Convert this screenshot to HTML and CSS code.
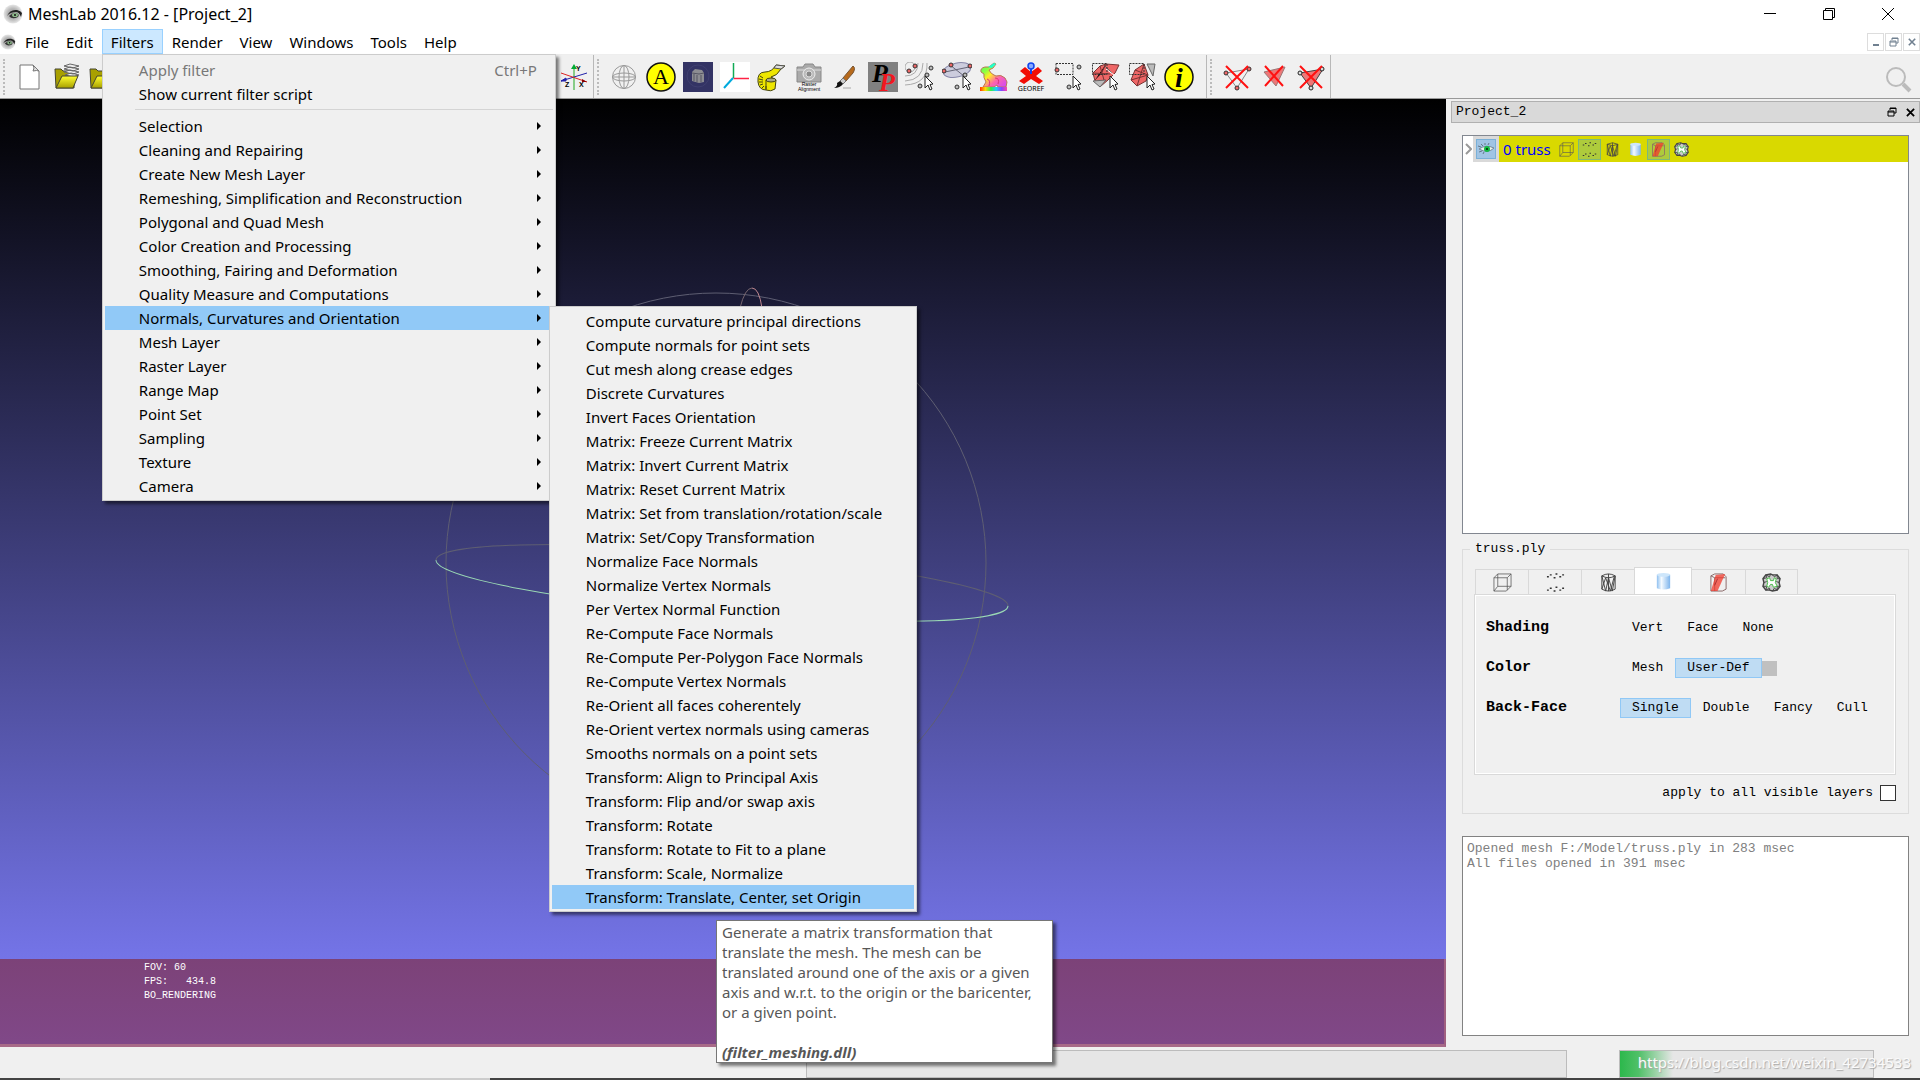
FILE: index.html
```html
<!DOCTYPE html>
<html lang="en">
<head>
    <meta charset="UTF-8">
    <meta name="viewport" content="width=device-width, initial-scale=1.0">
    <title>MeshLab 2016.12 - [Project_2]</title>
    <link rel="stylesheet" href="styles.css">
</head>
<body>
<!-- shared icons -->
<svg class="defs" width="0" height="0">
    <defs>
        <radialGradient id="ball"><stop offset="0" stop-color="#888"/><stop offset="0.6" stop-color="#bbb"/><stop offset="1" stop-color="#e8e8e8"/></radialGradient>
        <linearGradient id="cyl"><stop offset="0" stop-color="#8fc0f0"/><stop offset="0.35" stop-color="#f4faff"/><stop offset="1" stop-color="#7db4ec"/></linearGradient>
        <linearGradient id="folder" x2="0" y2="1"><stop offset="0" stop-color="#ffff30"/><stop offset="1" stop-color="#a8a000"/></linearGradient>
        <linearGradient id="rainbow"><stop offset="0" stop-color="#f30"/><stop offset="0.2" stop-color="#fd0"/><stop offset="0.4" stop-color="#3e4"/><stop offset="0.6" stop-color="#2cf"/><stop offset="0.8" stop-color="#84f"/><stop offset="1" stop-color="#f4a"/></linearGradient>
        <linearGradient id="bunny" x2="1" y2="1"><stop offset="0" stop-color="#4f6"/><stop offset="0.25" stop-color="#8f4"/><stop offset="0.42" stop-color="#fe2"/><stop offset="0.65" stop-color="#f6a"/><stop offset="1" stop-color="#c4f"/></linearGradient>
    </defs>
    <symbol id="logo" viewBox="0 0 20 20">
        <circle cx="10" cy="10" r="9.5" fill="url(#ball)"/>
        <path d="M4 12Q7 5 14 6Q18 7 19 9L18 13Q16 8 13 8Q7 8 4 12Z" fill="#222"/>
        <path d="M6 12Q9 16 15 13Q17 10 13 9Q9 9 6 12Z" fill="#333"/>
        <ellipse cx="12" cy="11" rx="3" ry="2" fill="#8db98a"/>
        <circle cx="12" cy="11" r="1" fill="#111"/>
    </symbol>
    <symbol id="box" viewBox="0 0 20 20">
        <path d="M1 5L5 1H19V14L14 19H1ZM1 5H15V18M15 5L19 1M5 1V14H19M5 14L1 19" fill="none" stroke="#555" stroke-opacity="0.8"/>
    </symbol>
    <symbol id="points" viewBox="0 0 20 20">
        <path d="M1 4h2M4 2h2M8 5h2M10 1h2M14 4h2M17 2h2M1 18h2M4 16h2M8 19h2M10 15h2M14 18h2M17 16h2" stroke="#333" stroke-width="1.5"/>
    </symbol>
    <symbol id="wire" viewBox="0 0 20 20">
        <path d="M3 3Q10 -1 17 3V17Q10 21 3 17ZM3 3Q10 7 17 3M3 3L7 19L10 5L14 19L17 3M3 17L7 5L12 19L16 4M10 1V19" fill="none" stroke="#444"/>
    </symbol>
    <symbol id="solid" viewBox="0 0 20 20">
        <path d="M3 3V17Q10 20 17 17V3Z" fill="url(#cyl)"/>
        <ellipse cx="10" cy="3" rx="7" ry="2" fill="#cde6fb"/>
    </symbol>
    <symbol id="selface" viewBox="0 0 20 20">
        <path d="M2 3L6 1H15L18 4V17L14 19H2ZM2 3L6 5V19M6 5H17" fill="none" stroke="#866"/>
        <path d="M7 2L17 1L9 19H2Z" fill="#f23a2c" fill-opacity="0.75"/>
        <path d="M9 6L6 13" stroke="#a33"/>
    </symbol>
    <symbol id="bound" viewBox="0 0 20 20">
        <path d="M4 2L9 1L11 2L16 2L19 6L18 10L19 14L16 18L11 19L8 18L4 18L1 14L2 10L1 6Z" fill="#ccc" stroke="#444" stroke-width="1.5"/>
        <path d="M1 6L5 5L4 2L8 4L9 1M11 2L13 4L16 2L16 6L19 6M2 10L5 9M18 10L15 9M1 14L5 14L4 18L8 16L8 18M11 19L13 16L16 18L16 14L19 14" fill="none" stroke="#444"/>
        <path d="M5 6L8 5L9 8H12L13 5L15 6L14 10L16 14L12 15L11 12H9L7 15L5 14L6 10Z" fill="#fff" stroke="#4b4"/>
    </symbol>
    <symbol id="pointer" viewBox="0 0 10 16">
        <path d="M1 1V13L4 10L6 15L8 14L6 9.500L9 9Z" fill="#fff" stroke="#222"/>
    </symbol>
    <symbol id="float" viewBox="0 0 10 10">
        <path d="M3 3V1H9V6H7M1 4H7V9H1ZM1 5H7M3 1.500H9" fill="none" stroke="currentColor"/>
    </symbol>
    <symbol id="cross" viewBox="0 0 10 10">
        <path d="M1 1L9 9M9 1L1 9" stroke="currentColor" stroke-width="2"/>
    </symbol>
</svg>

<header class="titlebar">
    <svg class="logo"><use href="#logo"/></svg>
    <span class="title">MeshLab 2016.12 - [Project_2]</span>
    <div class="win-buttons">
        <button aria-label="Minimize"><svg width="14" height="14"><path d="M1 6.500H13" stroke="#000"/></svg></button>
        <button aria-label="Restore"><svg width="14" height="14"><path d="M1.500 3.500H10.500V12.500H1.500ZM3.500 3V1.500H12.500V10.500H11" fill="none" stroke="#000"/></svg></button>
        <button aria-label="Close"><svg width="14" height="14"><path d="M1 1L13 13M13 1L1 13" stroke="#000"/></svg></button>
    </div>
</header>

<nav class="menubar">
    <svg class="logo small"><use href="#logo"/></svg>
    <div class="menu"><button>File</button></div>
    <div class="menu"><button>Edit</button></div>
    <div class="menu open">
        <button>Filters</button>
        <div class="popup main-popup">
            <button disabled>Apply filter <span>Ctrl+P</span></button>
            <button>Show current filter script</button>
            <hr>
            <button class="sub">Selection</button>
            <button class="sub">Cleaning and Repairing</button>
            <button class="sub">Create New Mesh Layer</button>
            <button class="sub">Remeshing, Simplification and Reconstruction</button>
            <button class="sub">Polygonal and Quad Mesh</button>
            <button class="sub">Color Creation and Processing</button>
            <button class="sub">Smoothing, Fairing and Deformation</button>
            <button class="sub">Quality Measure and Computations</button>
            <div class="sub-wrap">
                <button class="sub active">Normals, Curvatures and Orientation</button>
                <div class="popup sub-popup">
                    <button>Compute curvature principal directions</button>
                    <button>Compute normals for point sets</button>
                    <button>Cut mesh along crease edges</button>
                    <button>Discrete Curvatures</button>
                    <button>Invert Faces Orientation</button>
                    <button>Matrix: Freeze Current Matrix</button>
                    <button>Matrix: Invert Current Matrix</button>
                    <button>Matrix: Reset Current Matrix</button>
                    <button>Matrix: Set from translation/rotation/scale</button>
                    <button>Matrix: Set/Copy Transformation</button>
                    <button>Normalize Face Normals</button>
                    <button>Normalize Vertex Normals</button>
                    <button>Per Vertex Normal Function</button>
                    <button>Re-Compute Face Normals</button>
                    <button>Re-Compute Per-Polygon Face Normals</button>
                    <button>Re-Compute Vertex Normals</button>
                    <button>Re-Orient all faces coherentely</button>
                    <button>Re-Orient vertex normals using cameras</button>
                    <button>Smooths normals on a point sets</button>
                    <button>Transform: Align to Principal Axis</button>
                    <button>Transform: Flip and/or swap axis</button>
                    <button>Transform: Rotate</button>
                    <button>Transform: Rotate to Fit to a plane</button>
                    <button>Transform: Scale, Normalize</button>
                    <button class="active">Transform: Translate, Center, set Origin</button>
                </div>
            </div>
            <button class="sub">Mesh Layer</button>
            <button class="sub">Raster Layer</button>
            <button class="sub">Range Map</button>
            <button class="sub">Point Set</button>
            <button class="sub">Sampling</button>
            <button class="sub">Texture</button>
            <button class="sub">Camera</button>
        </div>
    </div>
    <div class="menu"><button>Render</button></div>
    <div class="menu"><button>View</button></div>
    <div class="menu"><button>Windows</button></div>
    <div class="menu"><button>Tools</button></div>
    <div class="menu"><button>Help</button></div>
    <div class="mdi-buttons">
        <button aria-label="Minimize project"><svg width="10" height="10"><path d="M2 8H8" stroke="currentColor" stroke-width="2"/></svg></button>
        <button aria-label="Restore project"><svg width="10" height="10"><use href="#float"/></svg></button>
        <button aria-label="Close project"><svg width="8" height="8"><use href="#cross"/></svg></button>
    </div>
</nav>

<div class="toolbar">
    <div class="tools tools-file">
        <button aria-label="New project"><svg viewBox="0 0 30 30"><path d="M5 3H18L24 9V27H5Z" fill="#fff" stroke="#777"/><path d="M18 3Q20 6 18 9Q22 8 24 9Z" fill="#ddd" stroke="#777"/></svg></button>
        <button aria-label="Open project"><svg viewBox="0 0 30 30"><path d="M3 7H9L11 9H22V26H4Z" fill="#a8a000" stroke="#443"/><path d="M12 4l6-2 9 2-6 2zM12 7l6-2 9 2-6 2zM12 10l6-2 9 2-6 2zM13 13l6-2 8 2-6 2z" fill="#eee" stroke="#666"/><path d="M10 14H26L21 26H4Z" fill="url(#folder)" stroke="#443"/></svg></button>
        <button aria-label="Import mesh"><svg viewBox="0 0 30 30"><path d="M1 7H7L9 9H20V26H2Z" fill="#a8a000" stroke="#443"/><path d="M8 14H26L21 26H2Z" fill="url(#folder)" stroke="#443"/></svg></button>
        <button class="last" aria-label="Show axis"><svg viewBox="0 0 30 30"><path d="M15 28V4" stroke="#8c8" stroke-width="2"/><path d="M12 7L15 2L18 7Z" fill="#0a3"/><path d="M2 19L28 11M2 19l5-3v3z" stroke="#22a" fill="#22a"/><path d="M2 11L28 20" stroke="#d22"/><path d="M28 20l-5-3v3z" fill="#800"/><text x="17" y="9" class="axis-text">Y</text><text x="6" y="25" class="axis-text">Z</text><text x="20" y="25" class="axis-text">X</text></svg></button>
    </div>
    <div class="tools tools-render">
        <button aria-label="Trackball"><svg viewBox="0 0 30 30"><g fill="none" stroke="#999"><circle cx="15" cy="15" r="11.500"/><ellipse cx="15" cy="15" rx="5" ry="11.500"/><ellipse cx="15" cy="15" rx="11.500" ry="4"/><path d="M4 15H26M15 4V26"/></g></svg></button>
        <button aria-label="Align"><svg viewBox="0 0 30 30"><circle cx="15" cy="15" r="14" fill="#ff0" stroke="#111" stroke-width="1.500"/><text x="15" y="22" class="align-text">A</text></svg></button>
        <button aria-label="Background"><svg viewBox="0 0 30 30"><path d="M0 0H30V30H0Z" fill="#333364"/><circle cx="15" cy="14" r="11" fill="none" stroke="#3f3f70"/><path d="M9 10L12 7L19 8L21 11V20L16 21L9 19Z" fill="#8c8c92"/><path d="M11 12V19M14 13V20M18 13V20M9 11L16 12L21 11" fill="none" stroke="#555563"/></svg></button>
        <button aria-label="Axes"><svg viewBox="0 0 30 30"><path d="M0 0H30V30H0Z" fill="#fff"/><path d="M13.500 1V16" stroke="#1a5" stroke-width="1.500"/><path d="M13.500 16.500H29" stroke="#f24" stroke-width="1.500"/><path d="M13 16L4 26" stroke="#0ad" stroke-width="2"/></svg></button>
        <button aria-label="Measure"><svg viewBox="0 0 30 30"><path d="M1 20Q0 10 8 10Q15 10 19 3L28 4L24 7Q20 14 14 15L19 18L18 27Q14 30 9 28Q2 28 1 20Z" fill="#eee600" stroke="#441"/><path d="M19 3L28 4L24 7L17 6Z" fill="#ddd" stroke="#555"/><ellipse cx="14" cy="18" rx="5" ry="2" fill="#aa8" stroke="#441"/><path d="M3 14l3 2M2 17l4 1M2 20l4 0M3 23l3-1M5 26l2-2M9 28v-4M9 18V27" stroke="#441"/></svg></button>
        <button aria-label="Raster alignment"><svg viewBox="0 0 30 30"><path d="M3 5H9L11 2H19L21 5H27V20H3Z" fill="#aaa" stroke="#888"/><path d="M3 8H27" stroke="#ddd"/><circle cx="15" cy="12" r="6" fill="#bbb" stroke="#eee"/><circle cx="15" cy="12" r="3" fill="#888" stroke="#ddd"/><text x="15" y="24" class="raster-text">Raster</text><text x="15" y="29" class="raster-text">Alignment</text></svg></button>
        <button aria-label="Paint"><svg viewBox="0 0 30 30"><path d="M22 4Q25 6 22 11L15 19L12 16Z" fill="#b76a1c" stroke="#753"/><path d="M12 16L15 19L12 22L9 19Z" fill="#ccc" stroke="#777"/><path d="M9 19L12 22Q9 26 3 26Q7 24 6 21Z" fill="#111"/><path d="M12 26H20" stroke="#ccc" stroke-width="2"/></svg></button>
        <button aria-label="Pick points"><svg viewBox="0 0 30 30"><path d="M0 0H30V30H0Z" fill="#808080"/><text x="4" y="20" class="pp-text">P</text><text x="11" y="29" class="pp-text red">P</text></svg></button>
        <button aria-label="Select connected"><svg viewBox="0 0 30 30"><g fill="none" stroke="#aaa"><circle cx="5" cy="5" r="5"/><path d="M0 14Q13 14 13 1M0 19Q18 18 18 1M0 23Q23 22 22 1"/></g><g fill="#e66" stroke="#333"><circle cx="10" cy="4" r="2"/><circle cx="4" cy="9" r="2"/></g><g fill="#bbb" stroke="#333"><circle cx="26" cy="6" r="2"/><circle cx="22" cy="13" r="2"/><circle cx="15" cy="24" r="2"/></g><use href="#pointer" x="19" y="13" width="10" height="16"/></svg></button>
        <button aria-label="Fit plane"><svg viewBox="0 0 30 30"><ellipse cx="15" cy="8" rx="14" ry="7" transform="rotate(-12 15 8)" fill="#ccd" stroke="#88a"/><path d="M8 3L22 14M3 10L27 5" stroke="#667"/><g fill="#e66" stroke="#333"><circle cx="9" cy="3" r="2"/><circle cx="2" cy="9" r="2"/><circle cx="28" cy="4" r="2"/></g><g fill="#bbb" stroke="#333"><circle cx="23" cy="13" r="2"/><circle cx="15" cy="25" r="2"/></g><use href="#pointer" x="20" y="13" width="10" height="16"/></svg></button>
        <button aria-label="Quality mapper"><svg viewBox="0 0 30 30"><path d="M2 10Q1 6 6 5L10 5L15 1L17 2L14 6L10 8Q12 12 15 13L17 14Q22 12 26 16L28 20L27 25H19L18 23L15 25H4L7 20Q4 15 5 12Z" fill="url(#bunny)" stroke="#b75"/><path d="M9 5L15 1L17 2L13 6Z" fill="#2fc"/><path d="M16 16Q21 16 19 22M8 17Q12 18 10 24" fill="none" stroke="#d37"/><path d="M1 25H28V29H1Z" fill="url(#rainbow)"/></svg></button>
        <button aria-label="Georeference"><svg viewBox="0 0 30 30"><path d="M4 9L9 5L15 10L22 5L26 9L20 14L27 19L23 22L15 17L8 22L3 19L10 14Z" fill="#f20d05"/><circle cx="15" cy="4" r="3" fill="#8af" stroke="#14e" stroke-width="1.500"/><path d="M15 7V12" stroke="#14e" stroke-width="2"/><text x="15" y="29" class="georef-text">GEOREF</text></svg></button>
        <button aria-label="Select vertices"><svg viewBox="0 0 30 30"><path d="M3 1.500H20V12.500H3Z" fill="none" stroke="#333" stroke-dasharray="2 1"/><circle cx="4" cy="8" r="2" fill="#e66" stroke="#333"/><g fill="#bbb" stroke="#333"><circle cx="26" cy="5" r="2"/><circle cx="16" cy="25" r="2"/></g><use href="#pointer" x="19" y="13" width="10" height="16"/></svg></button>
        <button aria-label="Select connected faces"><svg viewBox="0 0 30 30"><path d="M3 11L10 4L16 2L29 3L25 11L18 18L11 24L5 19Z" fill="#e66" stroke="#733"/><path d="M3 19L16 18L10 25ZM14 3L22 11" fill="#bbb" stroke="#666"/><path d="M3 11L20 12M10 4L14 18M16 2L11 12L5 18" stroke="#733"/><path d="M16 7L24 13" stroke="#fff"/><path d="M2.500 1.500H17V12.500H2.500Z" fill="none" stroke="#333" stroke-dasharray="2 1"/><use href="#pointer" x="19" y="13" width="10" height="16"/></svg></button>
        <button aria-label="Select faces"><svg viewBox="0 0 30 30"><path d="M4 18L8 8L17 2L21 13L19 19L10 24Z" fill="#e66" stroke="#733"/><path d="M20 2H28L26 14Z" fill="#bbb" stroke="#666"/><path d="M8 8L21 13L4 18M17 2L10 24" fill="none" stroke="#733"/><path d="M2.500 1.500H17V12.500H2.500Z" fill="none" stroke="#333" stroke-dasharray="2 1"/><use href="#pointer" x="19" y="13" width="10" height="16"/></svg></button>
        <button aria-label="Get info"><svg viewBox="0 0 30 30"><circle cx="15" cy="15" r="14" fill="#ff0" stroke="#111" stroke-width="1.500"/><text x="15" y="25" class="info-text">i</text></svg></button>
    </div>
    <div class="tools tools-delete">
        <button aria-label="Delete vertices"><svg viewBox="0 0 30 30"><path d="M4 11L27 7L15 26Z" fill="none" stroke="#888"/><g fill="#e66" stroke="#333"><circle cx="4" cy="11" r="2"/><circle cx="27" cy="7" r="2"/><circle cx="15" cy="26" r="2"/></g><path d="M4 4L26 26M26 4L4 26" stroke="#f11" stroke-width="2"/></svg></button>
        <button aria-label="Delete faces"><svg viewBox="0 0 30 30"><path d="M5 10L26 5L17 24Z" fill="#e77" stroke="#977"/><path d="M6 4L24 24M24 4L6 24" stroke="#f11" stroke-width="2"/></svg></button>
        <button aria-label="Delete faces and vertices"><svg viewBox="0 0 30 30"><path d="M4 11L27 7L15 26Z" fill="#e77" stroke="#444"/><g fill="#ddd" stroke="#222"><circle cx="4" cy="11" r="2"/><circle cx="26" cy="7" r="2"/><circle cx="15" cy="26" r="2"/></g><path d="M4 4L26 26M26 4L4 26" stroke="#f11" stroke-width="2"/></svg></button>
    </div>
    <button class="search" aria-label="Search"><svg viewBox="0 0 28 28"><circle cx="11" cy="11" r="9" fill="none" stroke="#bbb" stroke-width="2"/><path d="M18 18L25 25" stroke="#bbb" stroke-width="4"/></svg></button>
</div>

<main class="workspace">
    <section class="viewport">
        <!-- trackball -->
        <svg class="trackball" viewBox="0 99 1446 948" preserveAspectRatio="xMidYMid slice">
            <g fill="none">
                <circle cx="716" cy="563" r="270" stroke="#5e5e72"/>
                <g transform="matrix(1 0.08 0 1 722 583)">
                    <path d="M-286 0A286 31 0 0 1 286 0" stroke="#5e5e72"/>
                    <path d="M-286 0A286 31 0 0 0 286 0" stroke="#9ad8b4"/>
                </g>
                <path d="M740 308Q745 288 752 288" stroke="#77666f"/>
                <path d="M752 288Q759 288 762 308" stroke="#c08890"/>
            </g>
        </svg>
        <pre class="stats">FOV: 60
FPS:   434.8
BO_RENDERING</pre>
    </section>

    <aside class="dock">
        <header class="dock-title">
            <span>Project_2</span>
            <button aria-label="Float"><svg width="10" height="10"><use href="#float"/></svg></button>
            <button aria-label="Close panel"><svg width="9" height="9"><use href="#cross"/></svg></button>
        </header>
        <div class="dock-body">
            <div class="tree">
                <div class="layer">
                    <button class="expand" aria-label="Expand"><svg width="7" height="12"><path d="M1 1L6 6L1 11" fill="none" stroke="#999" stroke-width="2"/></svg></button>
                    <button class="eye" aria-label="Toggle visibility"><svg viewBox="0 0 18 18"><path d="M2 9Q9 4 17 8Q11 14 2 9Z" fill="#e8f4e8" stroke="#789"/><path d="M1 6l3 1M4 4l2 2M8 3v2M12 3l-1 2M2 12l3-1M6 14l1-2" stroke="#678"/><circle cx="10" cy="9" r="3" fill="#1b4"/><circle cx="10" cy="9" r="1" fill="#020"/></svg></button>
                    <div class="layer-name">0 truss</div>
                    <div class="layer-icons">
                        <button aria-label="Bounding box"><svg><use href="#box"/></svg></button>
                        <button class="on" aria-label="Points"><svg><use href="#points"/></svg></button>
                        <button aria-label="Wireframe"><svg><use href="#wire"/></svg></button>
                        <button aria-label="Solid"><svg><use href="#solid"/></svg></button>
                        <button class="on" aria-label="Selection"><svg><use href="#selface"/></svg></button>
                        <button aria-label="Boundary"><svg><use href="#bound"/></svg></button>
                    </div>
                </div>
            </div>

            <fieldset class="params">
                <legend>truss.ply</legend>
                <div class="tabs">
                    <button aria-label="Bounding box options"><svg><use href="#box"/></svg></button>
                    <button aria-label="Point options"><svg><use href="#points"/></svg></button>
                    <button aria-label="Wireframe options"><svg><use href="#wire"/></svg></button>
                    <button class="current" aria-label="Solid options"><svg><use href="#solid"/></svg></button>
                    <button aria-label="Selection options"><svg><use href="#selface"/></svg></button>
                    <button aria-label="Boundary options"><svg><use href="#bound"/></svg></button>
                </div>
                <div class="pane">
                    <div class="option">
                        <b>Shading</b>
                        <button>Vert</button><button>Face</button><button>None</button>
                    </div>
                    <div class="option">
                        <b>Color</b>
                        <button>Mesh</button><button class="on">User-Def</button><span class="swatch"></span>
                    </div>
                    <div class="option">
                        <b>Back-Face</b>
                        <button class="on">Single</button><button>Double</button><button>Fancy</button><button>Cull</button>
                    </div>
                </div>
                <div class="apply">
                    <label for="apply-all">apply to all visible layers</label>
                    <input type="checkbox" id="apply-all">
                </div>
            </fieldset>

            <div class="log">Opened mesh F:/Model/truss.ply in 283 msec<br>All files opened in 391 msec</div>
        </div>
    </aside>
</main>

<footer class="statusbar">
    <div class="status-box"></div>
    <progress value="21" max="100" aria-label="Progress"></progress>
    <span class="watermark">https://blog.csdn.net/weixin_42734533</span>
</footer>
<div class="taskbar-edge"></div>

<div class="tooltip" role="tooltip">
    Generate a matrix transformation that<br>
    translate the mesh. The mesh can be<br>
    translated around one of the axis or a given<br>
    axis and w.r.t. to the origin or the baricenter,<br>
    or a given point.<br><br>
    <b><i>(filter_meshing.dll)</i></b>
</div>
</body>
</html>
```

FILE: styles.css
```css
* {
    box-sizing: border-box;
}
body {
    margin: 0;
    height: 100vh;
    display: flex;
    flex-direction: column;
    overflow: hidden;
    background: #f0f0f0;
    color: #000;
    font-family: "Noto Sans", "Open Sans", sans-serif;
    font-size: 15px;
}
button {
    margin: 0;
    padding: 0;
    border: none;
    background: none;
    color: inherit;
    font: inherit;
    text-align: left;
    white-space: nowrap;
}
svg {
    display: block;
}
.defs {
    position: absolute;
}

/* title and menu bar */
.titlebar {
    display: flex;
    align-items: center;
    height: 29px;
    padding: 0 3px 2px;
    background: #fff;
    font-size: 16px;
}
.logo {
    width: 20px;
    height: 20px;
    margin-right: 5px;
}
.logo.small {
    width: 16px;
    height: 16px;
    margin: 0;
}
.win-buttons {
    display: flex;
    margin-left: auto;
}
.win-buttons button {
    display: flex;
    justify-content: center;
    width: 59px;
}
.menubar {
    display: flex;
    align-items: center;
    gap: 1px;
    height: 26px;
    background: #fff;
    border-bottom: 1px solid #eee;
}
.menu {
    position: relative;
}
.menu > button {
    height: 25px;
    padding: 0 7px;
    border: 1px solid transparent;
}
.menu.open > button {
    padding: 0 8px;
    background: #cce8ff;
    border-color: #99d1ff;
}
.mdi-buttons {
    display: flex;
    gap: 1px;
    margin-left: auto;
}
.mdi-buttons button {
    display: flex;
    align-items: center;
    justify-content: center;
    width: 17px;
    height: 18px;
    border: 1px solid #ddd;
    color: #708090;
}

/* popups */
.popup {
    position: absolute;
    z-index: 5;
    padding: 2px;
    background: #f0f0f0;
    border: 1px solid #ccc;
    box-shadow: 3px 3px 3px rgba(0, 0, 0, 0.5);
}
.popup button {
    display: flex;
    justify-content: space-between;
    align-items: center;
    width: 100%;
    height: 24px;
    padding-left: 34px;
    line-height: 24px;
}
.popup button:disabled {
    padding-right: 16px;
    color: #787878;
}
.popup .active {
    background: #91c9f7;
}
.popup hr {
    height: 1px;
    margin: 3px 0 4px 30px;
    border: none;
    background: #d4d4d4;
}
.popup .sub::after {
    content: "";
    margin-right: 12px;
    border: 4px solid transparent;
    border-left-color: #000;
    border-right-width: 0;
}
.main-popup {
    top: 100%;
    left: 0;
    width: 454px;
    padding-top: 3px;
}
.sub-wrap {
    position: relative;
}
.sub-popup {
    top: 0;
    left: 444px;
    width: 368px;
}

/* toolbar */
.toolbar {
    display: flex;
    height: 44px;
    border-bottom: 1px solid #999;
}
.tools {
    display: flex;
    align-items: center;
    gap: 7px;
    padding-right: 4px;
    border-right: 1px solid #b8b8b8;
}
.tools::before {
    content: "";
    width: 3px;
    height: 36px;
    margin-left: 3px;
    border-left: 2px dotted #bbb;
}
.tools svg {
    width: 30px;
    height: 30px;
}
.tools-file {
    width: 594px;
}
.tools-file .last {
    margin-left: auto;
}
.tools-render {
    padding-right: 12px;
}
.search {
    margin-left: auto;
    padding: 7px 7px 0 0;
}
.search svg {
    width: 28px;
    height: 28px;
}
.axis-text {
    font: bold 7px "Liberation Sans", sans-serif;
}
.align-text {
    font: 22px "Liberation Serif", serif;
    text-anchor: middle;
}
.raster-text {
    font: 5px "Liberation Sans", sans-serif;
    text-anchor: middle;
}
.pp-text {
    font: italic bold 26px "Liberation Serif", serif;
}
.pp-text.red {
    fill: #f01820;
}
.georef-text {
    font: 7px "Noto Sans", sans-serif;
    text-anchor: middle;
}
.info-text {
    font: italic bold 28px "Liberation Serif", serif;
    text-anchor: middle;
}

/* workspace */
.workspace {
    flex: 1;
    display: flex;
    gap: 5px;
    min-height: 0;
}
.viewport {
    position: relative;
    flex: 1;
    display: flex;
    flex-direction: column;
    justify-content: flex-end;
    background: linear-gradient(#000, #8080ff);
}
.trackball {
    position: absolute;
    width: 100%;
    height: 100%;
}
.stats {
    position: relative;
    height: 88px;
    margin: 0;
    padding: 2px 0 0 144px;
    border-right: 2px solid #a06080;
    border-bottom: 3px solid #a86a88;
    background: linear-gradient(#7c4278, #804888);
    color: #fff;
    font: 10px/14px "Liberation Mono", monospace;
}

/* right dock */
.dock {
    display: flex;
    flex-direction: column;
    width: 469px;
    padding-top: 2px;
    font: 13px/18px "Liberation Mono", monospace;
}
.dock-title {
    display: flex;
    align-items: center;
    gap: 9px;
    height: 22px;
    padding: 0 4px;
    border: 1px solid #b0b0b0;
    background: #d9d9d9;
}
.dock-title span {
    flex: 1;
}
.dock-body {
    flex: 1;
    display: flex;
    flex-direction: column;
    padding: 12px 11px 11px;
}
.tree {
    flex: 2 1 20px;
    border: 1px solid #828790;
    background: #fff;
}
.layer {
    display: flex;
    align-items: center;
    height: 26px;
    background: #d9d900;
}
.expand {
    align-self: stretch;
    width: 10px;
    padding-left: 2px;
    background: #fff;
}
.eye {
    align-self: stretch;
    padding: 3px;
    background: #d9d9d9;
}
.eye svg {
    width: 20px;
    height: 20px;
    border: 1px solid #7ab0d8;
    background: #a0c4e4;
}
.layer-name {
    padding: 0 4px;
    color: #00f;
    font: 15px "Noto Sans", sans-serif;
}
.layer-icons {
    display: flex;
}
.layer-icons button {
    display: flex;
    align-items: center;
    justify-content: center;
    width: 23px;
    height: 21px;
    border: 1px solid transparent;
}
.layer-icons .on {
    background: #aecb3c;
    border-color: #7cb87c;
}
.layer-icons svg {
    width: 15px;
    height: 15px;
}
.params {
    min-width: 0;
    margin: 6px 0 22px;
    padding: 9px 12px 11px 11px;
    border: 1px solid #dcdcdc;
}
.params legend {
    padding: 0 5px;
    margin-left: -4px;
}
.tabs {
    display: flex;
    align-items: flex-end;
    padding-left: 1px;
}
.tabs button {
    display: flex;
    align-items: center;
    justify-content: center;
    width: 53px;
    height: 25px;
    border: 1px solid #d9d9d9;
    border-width: 1px 0 0 1px;
}
.tabs button:last-child {
    border-right-width: 1px;
}
.tabs .current {
    width: 58px;
    height: 27px;
    border-right-width: 1px;
    background: #fff;
}
.tabs .current + button {
    border-left-width: 0;
}
.tabs svg {
    width: 19px;
    height: 19px;
}
.pane {
    display: flex;
    flex-direction: column;
    gap: 20px;
    height: 181px;
    padding: 23px 11px;
    border: 1px solid #d9d9d9;
    box-shadow: inset 0 0 0 1px #fff;
}
.option {
    display: flex;
    align-items: center;
    height: 20px;
}
.option b {
    width: 134px;
    font-size: 15px;
}
.option button {
    height: 20px;
    padding: 0 11px;
    border: 1px solid transparent;
}
.option .on {
    background: #bfdcf3;
    border-color: #90c8f6;
}
.swatch {
    width: 15px;
    height: 15px;
    background: #c0c0c0;
}
.apply {
    display: flex;
    align-items: center;
    justify-content: flex-end;
    gap: 7px;
    padding-top: 9px;
}
.apply input {
    appearance: none;
    width: 16px;
    height: 16px;
    margin: 0;
    border: 1px solid #333;
    background: #fff;
}
.log {
    flex: 1 1 10px;
    padding: 4px;
    border: 1px solid #828282;
    background: #fff;
    color: #808080;
    line-height: 15px;
}

/* status bar */
.statusbar {
    position: relative;
    display: flex;
    gap: 52px;
    height: 31px;
    padding: 3px 46px 0 42%;
}
.status-box {
    flex: 1;
    border: 1px solid #bcbcbc;
    background: #e6e6e6;
}
progress {
    appearance: none;
    width: 255px;
    height: 28px;
    border: 1px solid #bcbcbc;
    background: #e6e6e6;
}
progress::-webkit-progress-bar {
    background: #e6e6e6;
}
progress::-webkit-progress-value {
    background: linear-gradient(90deg, #2cb84c, #50c068 35%, #e6e6e6);
}
.watermark {
    position: absolute;
    right: 9px;
    bottom: 6px;
    color: #fafafa;
    font-size: 15px;
    text-shadow: 1px 1px 1px #aaa;
}
.taskbar-edge {
    height: 2px;
    background: linear-gradient(90deg, #444 60px, #ccc 60px, #ccc 490px, #444 490px);
}

.tooltip {
    position: absolute;
    top: 920px;
    left: 716px;
    z-index: 6;
    width: 337px;
    padding: 1px 5px 0;
    border: 1px solid #767676;
    background: #fff;
    color: #575757;
    line-height: 20px;
    white-space: nowrap;
    box-shadow: 3px 3px 3px rgba(0, 0, 0, 0.5);
}
```
